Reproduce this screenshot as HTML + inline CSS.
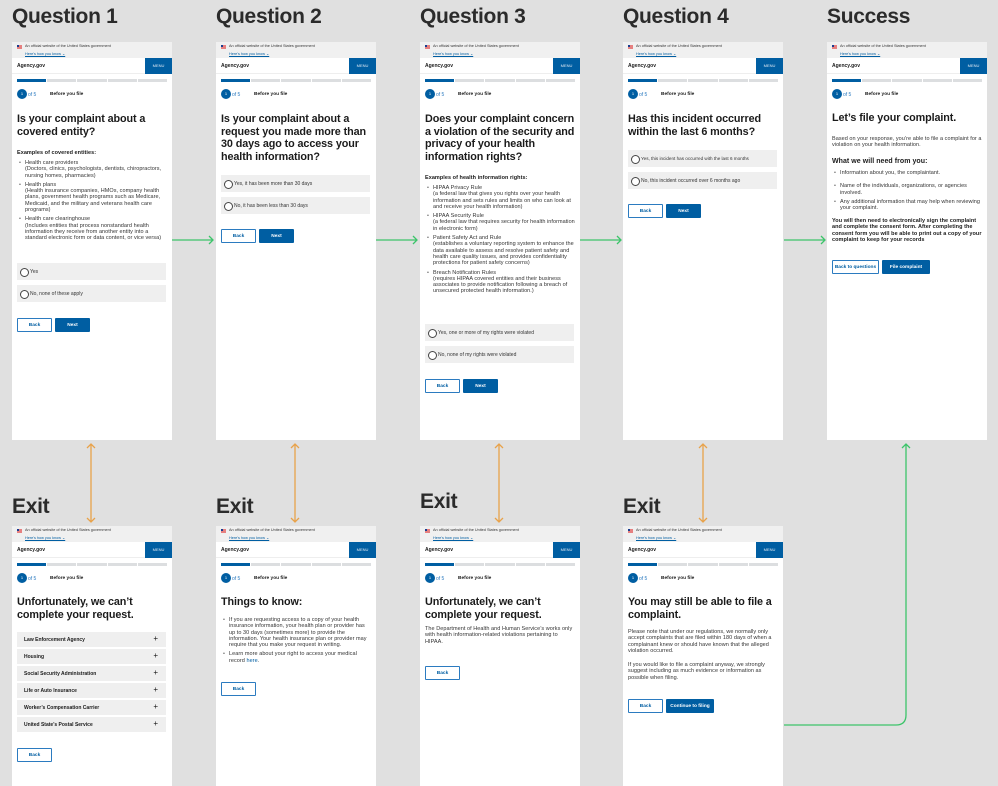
<!DOCTYPE html>
<html><head><meta charset="utf-8"><style>
*{box-sizing:border-box;margin:0;padding:0}
body{width:998px;height:773px;background:#e0e0e0;position:relative;overflow:hidden;font-family:"Liberation Sans",sans-serif;color:#1b1b1b}
.h{position:absolute;font-size:21px;font-weight:bold;color:#2b2b2b;letter-spacing:-0.3px}
.s{position:absolute;width:160px;background:#fff;overflow:hidden}
.top{top:42px;height:398px}
.bot{top:526px;height:260px}
.ban{position:absolute;left:0;top:0;width:160px;height:16px;background:#f0f0f0}
.flag{position:absolute;left:5px;top:3px;width:5px;height:3.5px;background:repeating-linear-gradient(#c00 0 0.5px,#fff 0.5px 1px)}
.flag:before{content:"";position:absolute;left:0;top:0;width:2.3px;height:2px;background:#1a3d8f}
.b1{position:absolute;left:13px;top:2px;font-size:3.8px;color:#333;white-space:nowrap}
.b2{position:absolute;left:13px;top:8.5px;font-size:3.8px;color:#005ea2;text-decoration:underline;white-space:nowrap}
.hdr{position:absolute;left:0;top:16px;width:160px;height:16px;border-bottom:1px solid #eee}
.ag{position:absolute;left:5px;top:5px;font-size:5px;font-weight:bold}
.menu{position:absolute;right:0;top:0;width:27px;height:16px;background:#005ea2;color:#dfe9f3;font-size:4px;text-align:center;line-height:16px}
.prog{position:absolute;left:5px;top:37px;width:150px;height:2.5px;display:flex;gap:1px}
.prog i{flex:1;background:#dcdee0}.prog i:first-child{background:#005ea2}
.circ{position:absolute;left:5px;top:47px;width:10px;height:10px;border-radius:50%;background:#005ea2;color:#fff;font-size:4px;text-align:center;line-height:10px}
.of{position:absolute;left:16px;top:49.5px;font-size:5px;color:#2b7bc0}
.byf{position:absolute;left:38px;top:49.5px;font-size:4.8px;font-weight:bold}
.t{position:absolute;left:5px;width:152px;font-size:10.8px;line-height:12.5px;font-weight:bold;letter-spacing:-0.1px}
.p{position:absolute;left:5px;width:150px;font-size:5.5px;line-height:6.3px;color:#333;letter-spacing:0.05px}
.p b{color:#1b1b1b}
ul.p{list-style:none}
ul.p li{position:relative;padding-left:8px;margin-bottom:3px}
ul.p li:before{content:"•";position:absolute;left:2px;color:#666}
.r{position:absolute;left:5px;width:149px;height:17px;background:#efefef;font-size:5px;padding:6px 0 0 13px;color:#333;white-space:nowrap}
.r:before{content:"";position:absolute;left:3px;top:4.5px;width:7px;height:7px;border:0.8px solid #444;border-radius:50%;background:#fff}
.btn{position:absolute;height:14px;font-size:4.8px;font-weight:bold;text-align:center;padding-top:4.5px;border-radius:1px}
.bk{border:1px solid #2b7bc0;color:#005ea2;background:#fff;padding-top:3.5px}
.nx{background:#005ea2;color:#fff}
.acc{position:absolute;left:5px;width:149px;height:15px;background:#efefef;font-size:5px;font-weight:bold;padding:5px 0 0 7px}
.acc:after{content:"+";position:absolute;right:8px;top:2px;font-size:8px;font-weight:normal}
svg{position:absolute;left:0;top:0}
</style></head><body>

<div class="h" style="left:12px;top:5px">Question 1</div>
<div class="h" style="left:216px;top:5px">Question 2</div>
<div class="h" style="left:420px;top:5px">Question 3</div>
<div class="h" style="left:623px;top:5px">Question 4</div>
<div class="h" style="left:827px;top:5px">Success</div>
<div class="h" style="left:12px;top:495px">Exit</div>
<div class="h" style="left:216px;top:495px">Exit</div>
<div class="h" style="left:420px;top:490px">Exit</div>
<div class="h" style="left:623px;top:495px">Exit</div>

<svg width="998" height="773">
<g stroke="#3cc46a" stroke-width="1.3" fill="none">
<path d="M172 240H213M209 236l4 4-4 4"/>
<path d="M376 240H417M413 236l4 4-4 4"/>
<path d="M580 240H621M617 236l4 4-4 4"/>
<path d="M784 240H825M821 236l4 4-4 4"/>
<path d="M784 725H896Q906 725 906 715V444M902 448l4-4 4 4"/>
</g>
<g stroke="#e8a24a" stroke-width="1.3" fill="none">
<path d="M91 444V522M87 448l4-4 4 4M87 518l4 4 4-4"/>
<path d="M295 444V522M291 448l4-4 4 4M291 518l4 4 4-4"/>
<path d="M499 444V522M495 448l4-4 4 4M495 518l4 4 4-4"/>
<path d="M703 444V522M699 448l4-4 4 4M699 518l4 4 4-4"/>
</g>
</svg>

<!-- Q1 -->
<div class="s top" style="left:12px">
<div class="ban"><div class="flag"></div><div class="b1">An official website of the United States government</div><div class="b2">Here's how you know ⌄</div></div>
<div class="hdr"><div class="ag">Agency.gov</div><div class="menu">MENU</div></div>
<div class="prog"><i></i><i></i><i></i><i></i><i></i></div>
<div class="circ">1</div><div class="of">of 5</div><div class="byf">Before you file</div>
<div class="t" style="top:71px">Is your complaint about a covered entity?</div>
<div class="p" style="top:108px"><b>Examples of covered entities:</b></div>
<ul class="p" style="top:118px">
<li>Health care providers<br>(Doctors, clinics, psychologists, dentists, chiropractors, nursing homes, pharmacies)</li>
<li>Health plans<br>(Health insurance companies, HMOs, company health plans, government health programs such as Medicare, Medicaid, and the military and veterans health care programs)</li>
<li>Health care clearinghouse<br>(Includes entities that process nonstandard health information they receive from another entity into a standard electronic form or data content, or vice versa)</li>
</ul>
<div class="r" style="top:221px">Yes</div>
<div class="r" style="top:243px">No, none of these apply</div>
<div class="btn bk" style="left:5px;top:276px;width:35px">Back</div>
<div class="btn nx" style="left:43px;top:276px;width:35px">Next</div>
</div>

<!-- Q2 -->
<div class="s top" style="left:216px">
<div class="ban"><div class="flag"></div><div class="b1">An official website of the United States government</div><div class="b2">Here's how you know ⌄</div></div>
<div class="hdr"><div class="ag">Agency.gov</div><div class="menu">MENU</div></div>
<div class="prog"><i></i><i></i><i></i><i></i><i></i></div>
<div class="circ">1</div><div class="of">of 5</div><div class="byf">Before you file</div>
<div class="t" style="top:71px">Is your complaint about a request you made more than 30 days ago to access your health information?</div>
<div class="r" style="top:133px">Yes, it has been more than 30 days</div>
<div class="r" style="top:155px">No, it has been less than 30 days</div>
<div class="btn bk" style="left:5px;top:187px;width:35px">Back</div>
<div class="btn nx" style="left:43px;top:187px;width:35px">Next</div>
</div>

<!-- Q3 -->
<div class="s top" style="left:420px">
<div class="ban"><div class="flag"></div><div class="b1">An official website of the United States government</div><div class="b2">Here's how you know ⌄</div></div>
<div class="hdr"><div class="ag">Agency.gov</div><div class="menu">MENU</div></div>
<div class="prog"><i></i><i></i><i></i><i></i><i></i></div>
<div class="circ">1</div><div class="of">of 5</div><div class="byf">Before you file</div>
<div class="t" style="top:71px">Does your complaint concern a violation of the security and privacy of your health information rights?</div>
<div class="p" style="top:133px"><b>Examples of health information rights:</b></div>
<ul class="p" style="top:143px">
<li>HIPAA Privacy Rule<br>(a federal law that gives you rights over your health information and sets rules and limits on who can look at and receive your health information)</li>
<li>HIPAA Security Rule<br>(a federal law that requires security for health information in electronic form)</li>
<li>Patient Safety Act and Rule<br>(establishes a voluntary reporting system to enhance the data available to assess and resolve patient safety and health care quality issues, and provides confidentiality protections for patient safety concerns)</li>
<li>Breach Notification Rules<br>(requires HIPAA covered entities and their business associates to provide notification following a breach of unsecured protected health information.)</li>
</ul>
<div class="r" style="top:282px">Yes,  one or more of my rights were violated</div>
<div class="r" style="top:304px">No, none of my rights were violated</div>
<div class="btn bk" style="left:5px;top:337px;width:35px">Back</div>
<div class="btn nx" style="left:43px;top:337px;width:35px">Next</div>
</div>

<!-- Q4 -->
<div class="s top" style="left:623px">
<div class="ban"><div class="flag"></div><div class="b1">An official website of the United States government</div><div class="b2">Here's how you know ⌄</div></div>
<div class="hdr"><div class="ag">Agency.gov</div><div class="menu">MENU</div></div>
<div class="prog"><i></i><i></i><i></i><i></i><i></i></div>
<div class="circ">1</div><div class="of">of 5</div><div class="byf">Before you file</div>
<div class="t" style="top:71px">Has this incident occurred within the last 6 months?</div>
<div class="r" style="top:108px;font-size:4.6px">Yes, this incident has occurred with the last 6 months</div>
<div class="r" style="top:130px">No, this incident occurred over 6 months ago</div>
<div class="btn bk" style="left:5px;top:162px;width:35px">Back</div>
<div class="btn nx" style="left:43px;top:162px;width:35px">Next</div>
</div>

<!-- Success -->
<div class="s top" style="left:827px">
<div class="ban"><div class="flag"></div><div class="b1">An official website of the United States government</div><div class="b2">Here's how you know ⌄</div></div>
<div class="hdr"><div class="ag">Agency.gov</div><div class="menu">MENU</div></div>
<div class="prog"><i></i><i></i><i></i><i></i><i></i></div>
<div class="circ">1</div><div class="of">of 5</div><div class="byf">Before you file</div>
<div class="t" style="top:70px">Let’s file your complaint.</div>
<div class="p" style="top:94px">Based on your response, you’re able to file a complaint for a violation on your health information.</div>
<div class="p" style="top:115px;font-size:7px;line-height:9px;font-weight:bold;color:#1b1b1b">What we will need from you:</div>
<ul class="p" style="top:128px">
<li style="margin-bottom:7px">Information about you, the complaintant.</li>
<li style="margin-bottom:3px">Name of the individuals, organizations, or agencies involved.</li>
<li>Any additional information that may help when reviewing your complaint.</li>
</ul>
<div class="p" style="top:176px;font-weight:bold;color:#1b1b1b">You will then need to electronically sign the complaint and complete the consent form. After completing the consent form you will be able to print out a copy of your complaint to keep for your records</div>
<div class="btn bk" style="left:5px;top:218px;width:47px">Back to questions</div>
<div class="btn nx" style="left:55px;top:218px;width:48px">File complaint</div>
</div>

<!-- Exit 1 -->
<div class="s bot" style="left:12px">
<div class="ban"><div class="flag"></div><div class="b1">An official website of the United States government</div><div class="b2">Here's how you know ⌄</div></div>
<div class="hdr"><div class="ag">Agency.gov</div><div class="menu">MENU</div></div>
<div class="prog"><i></i><i></i><i></i><i></i><i></i></div>
<div class="circ">1</div><div class="of">of 5</div><div class="byf">Before you file</div>
<div class="t" style="top:70px">Unfortunately, we can’t complete your request.</div>
<div class="acc" style="top:106px">Law Enforcement Agency</div>
<div class="acc" style="top:123px">Housing</div>
<div class="acc" style="top:140px">Social Security Administration</div>
<div class="acc" style="top:157px">Life or Auto Insurance</div>
<div class="acc" style="top:174px">Worker’s Compensation Carrier</div>
<div class="acc" style="top:191px">United State’s Postal Service</div>
<div class="btn bk" style="left:5px;top:222px;width:35px">Back</div>
</div>

<!-- Exit 2 -->
<div class="s bot" style="left:216px">
<div class="ban"><div class="flag"></div><div class="b1">An official website of the United States government</div><div class="b2">Here's how you know ⌄</div></div>
<div class="hdr"><div class="ag">Agency.gov</div><div class="menu">MENU</div></div>
<div class="prog"><i></i><i></i><i></i><i></i><i></i></div>
<div class="circ">1</div><div class="of">of 5</div><div class="byf">Before you file</div>
<div class="t" style="top:70px">Things to know:</div>
<ul class="p" style="top:91px">
<li>If you are requesting access to a copy of your health insurance information, your health plan or provider has up to 30 days (sometimes more) to provide the information. Your health insurance plan or provider may require that you make your request in writing.</li>
<li>Learn more about your right to access your medical record <span style="color:#005ea2">here</span>.</li>
</ul>
<div class="btn bk" style="left:5px;top:156px;width:35px">Back</div>
</div>

<!-- Exit 3 -->
<div class="s bot" style="left:420px">
<div class="ban"><div class="flag"></div><div class="b1">An official website of the United States government</div><div class="b2">Here's how you know ⌄</div></div>
<div class="hdr"><div class="ag">Agency.gov</div><div class="menu">MENU</div></div>
<div class="prog"><i></i><i></i><i></i><i></i><i></i></div>
<div class="circ">1</div><div class="of">of 5</div><div class="byf">Before you file</div>
<div class="t" style="top:70px">Unfortunately, we can’t complete your request.</div>
<div class="p" style="top:100px">The Department of Health and Human Service’s works only with health information-related violations pertaining to HIPAA.</div>
<div class="btn bk" style="left:5px;top:140px;width:35px">Back</div>
</div>

<!-- Exit 4 -->
<div class="s bot" style="left:623px">
<div class="ban"><div class="flag"></div><div class="b1">An official website of the United States government</div><div class="b2">Here's how you know ⌄</div></div>
<div class="hdr"><div class="ag">Agency.gov</div><div class="menu">MENU</div></div>
<div class="prog"><i></i><i></i><i></i><i></i><i></i></div>
<div class="circ">1</div><div class="of">of 5</div><div class="byf">Before you file</div>
<div class="t" style="top:70px">You may still be able to file a complaint.</div>
<div class="p" style="top:103px">Please note that under our regulations, we normally only accept complaints that are filed within 180 days of when a complainant knew or should have known that the alleged violation occurred.</div>
<div class="p" style="top:136px">If you would like to file a complaint anyway, we strongly suggest including as much evidence or information as possible when filing.</div>
<div class="btn bk" style="left:5px;top:173px;width:35px">Back</div>
<div class="btn nx" style="left:43px;top:173px;width:48px">Continue to filing</div>
</div>

</body></html>
